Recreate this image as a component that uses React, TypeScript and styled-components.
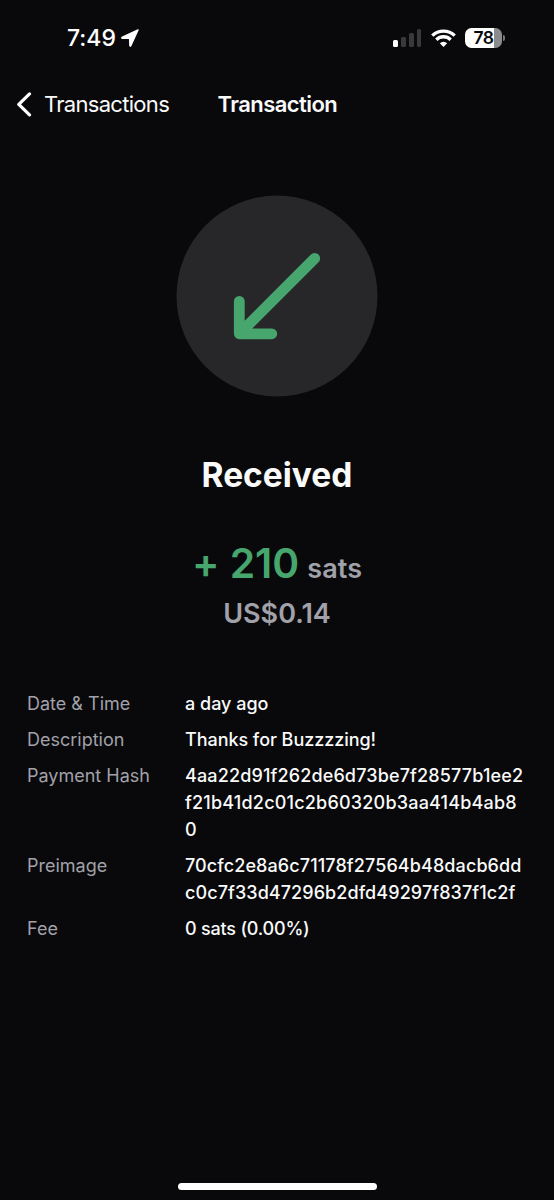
import React from "react";
import styled, { createGlobalStyle } from "styled-components";

const GlobalStyle = createGlobalStyle`
  * { box-sizing: border-box; }
  html, body { margin: 0; padding: 0; background: #09090b; }
  body {
    font-family: Inter, "Liberation Sans", sans-serif;
    font-feature-settings: "calt" 0;
    color: #fafafa;
  }
`;

const Screen = styled.main`
  width: 554px;
  height: 1200px;
  display: flex;
  flex-direction: column;
  background: #09090b;
  overflow: hidden;
`;

const StatusBar = styled.div`
  height: 75px;
  padding: 0 49px 0 67px;
  display: flex;
  align-items: center;
  justify-content: space-between;
  color: #fff;
`;

const Clock = styled.div`
  display: flex;
  align-items: center;
  gap: 5px;
  font-size: 23px;
  font-weight: 500;
  line-height: 28px;
`;

const Indicators = styled.div`
  display: flex;
  align-items: center;
  gap: 9.3px;
`;

const Signal = styled.div`
  height: 18px;
  display: flex;
  align-items: flex-end;
  gap: 3px;
`;

const SignalBar = styled.span<{ $height: number; $active?: boolean }>`
  width: 4.8px;
  height: ${(p) => p.$height}px;
  border-radius: 1.5px;
  background: ${(p) => (p.$active ? "#fff" : "#39393b")};
`;

const Battery = styled.div`
  display: flex;
  align-items: center;
  gap: 1px;
`;

const BatteryBody = styled.div`
  width: 37px;
  height: 20px;
  border-radius: 6.5px;
  display: flex;
  align-items: center;
  justify-content: center;
  background: linear-gradient(90deg, #fff 78%, #8b8b8d 78%);
  color: #09090b;
  font-size: 17.5px;
  font-weight: 600;
  line-height: 20px;
  letter-spacing: -0.5px;
`;

const BatteryTip = styled.span`
  width: 2px;
  height: 6px;
  border-radius: 0 2px 2px 0;
  background: #77777a;
`;

const NavBar = styled.header`
  height: 58px;
  padding-left: 16px;
  display: grid;
  grid-template-columns: 201.5px 1fr;
  align-items: center;
`;

const BackLink = styled.div`
  display: flex;
  align-items: center;
  gap: 11px;
  font-size: 22px;
  line-height: 28px;
  letter-spacing: -0.7px;
`;

const Title = styled.h1`
  margin: 0;
  font-size: 22px;
  font-weight: 600;
  line-height: 28px;
  letter-spacing: -0.55px;
`;

const Summary = styled.section`
  padding-top: 62px;
  display: flex;
  flex-direction: column;
  align-items: center;
`;

const IconDisc = styled.div`
  width: 202px;
  height: 202px;
`;

const State = styled.h2`
  margin: 58px 0 0;
  font-size: 33.5px;
  font-weight: 700;
  line-height: 40px;
`;

const Amount = styled.div`
  margin-top: 42px;
  display: flex;
  align-items: baseline;
  gap: 8px;
  line-height: 52px;
`;

const Value = styled.span`
  font-size: 40.8px;
  font-weight: 560;
  color: #47a66d;
`;

const Unit = styled.span`
  font-size: 27px;
  font-weight: 560;
  letter-spacing: 0.1px;
  color: #a1a1aa;
`;

const Fiat = styled.div`
  margin-top: 1px;
  font-size: 27px;
  font-weight: 560;
  line-height: 36px;
  color: #a1a1aa;
`;

const Details = styled.dl`
  margin: 58px 0 0;
  padding: 0 27px;
  display: flex;
  flex-direction: column;
  gap: 9px;
  font-size: 18px;
  line-height: 27px;
`;

const DetailRow = styled.div`
  display: grid;
  grid-template-columns: 158px 342px;
`;

const Term = styled.dt`
  color: #a1a1aa;
`;

const Description = styled.dd`
  margin: 0;
  font-weight: 500;
`;

const Line = styled.span<{ $tracking?: number }>`
  display: block;
  white-space: nowrap;
  letter-spacing: ${(p) => p.$tracking ?? 0}px;
`;

const HomeArea = styled.footer`
  margin-top: auto;
  padding-bottom: 10px;
  display: flex;
  justify-content: center;
`;

const HomeBar = styled.div`
  width: 199px;
  height: 7px;
  border-radius: 4px;
  background: #fff;
`;

type DetailLine = { text: string; tracking?: number };

const details: { term: string; lines: DetailLine[] }[] = [
  { term: "Date & Time", lines: [{ text: "a day ago" }] },
  { term: "Description", lines: [{ text: "Thanks for Buzzzzing!", tracking: -0.05 }] },
  {
    term: "Payment Hash",
    lines: [
      { text: "4aa22d91f262de6d73be7f28577b1ee2", tracking: 0.14 },
      { text: "f21b41d2c01c2b60320b3aa414b4ab8", tracking: 0.2 },
      { text: "0" },
    ],
  },
  {
    term: "Preimage",
    lines: [
      { text: "70cfc2e8a6c71178f27564b48dacb6dd", tracking: 0.1 },
      { text: "c0c7f33d47296b2dfd49297f837f1c2f", tracking: 0.08 },
    ],
  },
  { term: "Fee", lines: [{ text: "0 sats (0.00%)", tracking: -0.2 }] },
];

export default function App() {
  return (
    <>
      <GlobalStyle />
      <Screen>
        <StatusBar>
          <Clock>
            7:49
            <svg width="18" height="18" viewBox="0 0 18 18" fill="#fff" stroke="#fff" strokeWidth="1.4" strokeLinejoin="round">
              <path d="M17 1 .9 8.500Q.5 9 1.200 9.200L8.600 9.400 8.900 16.800Q9.200 17.500 9.700 16.900Z" />
            </svg>
          </Clock>
          <Indicators>
            <Signal>
              <SignalBar $height={7} $active />
              <SignalBar $height={10} />
              <SignalBar $height={14} />
              <SignalBar $height={18} />
            </Signal>
            <svg width="25" height="18" viewBox="0 0 25 18" fill="none" stroke="#fff" strokeWidth="3.3">
              <path d="M1.300 6.600A16 16 0 0 1 23.700 6.600" />
              <path d="M5.300 10.700A10.300 10.300 0 0 1 19.700 10.700" />
              <path d="M12.500 18 8.800 14.300A5.300 5.300 0 0 1 16.200 14.300Z" fill="#fff" stroke="none" />
            </svg>
            <Battery>
              <BatteryBody>78</BatteryBody>
              <BatteryTip />
            </Battery>
          </Indicators>
        </StatusBar>
        <NavBar>
          <BackLink>
            <svg width="17" height="26" viewBox="0 0 17 26" fill="none" stroke="#fff" strokeWidth="3.2" strokeLinecap="round" strokeLinejoin="round">
              <path d="M13.500 2.900 2.800 13.400 13.500 23.900" />
            </svg>
            Transactions
          </BackLink>
          <Title>Transaction</Title>
        </NavBar>
        <Summary>
          <IconDisc>
            <svg width="202" height="202" viewBox="0 0 202 202" fill="none">
              <circle cx="101" cy="101" r="100.500" fill="#27272a" />
              <path
                d="M138.700 63.400 63.300 138.800M63.300 106.300V138.800H95.800"
                stroke="#47a66d"
                strokeWidth="10.8"
                strokeLinecap="round"
                strokeLinejoin="round"
              />
            </svg>
          </IconDisc>
          <State>Received</State>
          <Amount>
            <Value>+ 210</Value>
            <Unit>sats</Unit>
          </Amount>
          <Fiat>US$0.14</Fiat>
        </Summary>
        <Details>
          {details.map(({ term, lines }) => (
            <DetailRow key={term}>
              <Term>{term}</Term>
              <Description>
                {lines.map(({ text, tracking }) => (
                  <Line key={text} $tracking={tracking}>
                    {text}
                  </Line>
                ))}
              </Description>
            </DetailRow>
          ))}
        </Details>
        <HomeArea>
          <HomeBar />
        </HomeArea>
      </Screen>
    </>
  );
}
